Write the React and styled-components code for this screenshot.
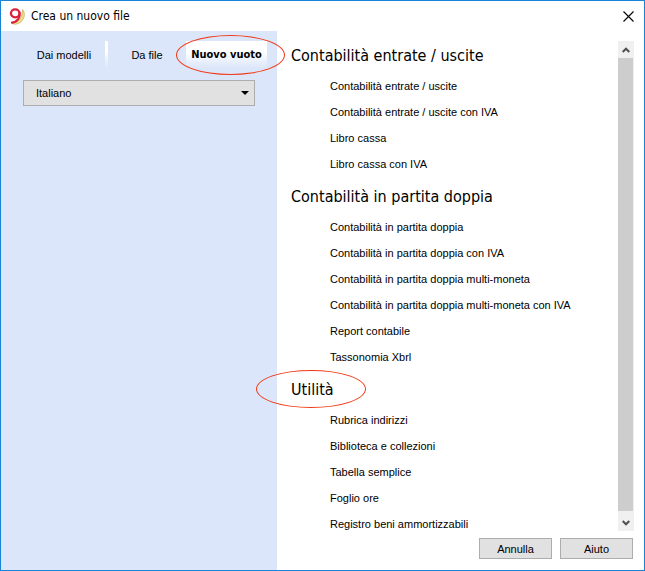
import React from "react";
import styled, { createGlobalStyle } from "styled-components";

const displayFont = '"DejaVu Sans Condensed", "Noto Sans", sans-serif';

const GlobalStyle = createGlobalStyle`
  * { box-sizing: border-box; }
  body { margin: 0; background: #fff; }
  body, button, select {
    font-family: "Liberation Sans", Arial, sans-serif;
    font-size: 11px;
    color: #000;
  }
`;

const Dialog = styled.div`
  display: flex;
  flex-direction: column;
  height: 100vh;
  border: 1px solid #1883d7;
  background: #fff;
`;

const TitleBar = styled.header`
  display: flex;
  align-items: center;
  flex: none;
  height: 30px;
  padding: 0 10px 0 8px;
`;

const Title = styled.h1`
  flex: 1;
  margin: 0 0 0 5px;
  font-family: ${displayFont};
  font-size: 12px;
  line-height: 16px;
  font-weight: 400;
`;

const CloseButton = styled.button`
  display: flex;
  padding: 0;
  border: 0;
  background: none;
`;

const Body = styled.div`
  display: flex;
  flex: 1;
  min-height: 0;
`;

const Sidebar = styled.aside`
  flex: 0 0 276px;
  padding: 10px 22px;
  background: #dbe6fa;
`;

const Tabs = styled.div`
  display: grid;
  grid-template-columns: 82px 3px 78px 81px;
  height: 27px;
  margin-right: -12px;
`;

const fade = "linear-gradient(#fff 40%, #dbe6fa)";

const Tab = styled.button`
  position: relative;
  z-index: 1;
  padding: 0;
  border: 0;
  white-space: nowrap;
  font-family: ${(p) => (p.$active ? displayFont : "inherit")};
  font-weight: ${(p) => (p.$active ? 700 : 400)};
  background: ${(p) => (p.$active ? fade : "none")};
`;

const TabDivider = styled.span`
  background: ${fade};
`;

const Marker = styled.span`
  position: absolute;
  border: 1px solid #f23a17;
  border-radius: 50%;
  pointer-events: none;
`;

const TabMarker = styled(Marker)`
  inset: -6px -18px -7px -10px;
`;

const HeadingMarker = styled(Marker)`
  inset: -5px -32px -3px -35px;
`;

const SelectBox = styled.div`
  display: grid;
  align-items: center;
  margin-top: 12px;
  & > * { grid-area: 1 / 1; }
  & > svg { justify-self: end; margin-right: 6px; pointer-events: none; }
`;

const Select = styled.select`
  appearance: none;
  width: 100%;
  height: 26px;
  padding: 0 12px;
  border: 1px solid #adadad;
  border-radius: 0;
  background: #e1e1e1;
`;

const Main = styled.main`
  display: flex;
  flex-direction: column;
  flex: 1;
  min-width: 0;
  padding: 10px 10px 11px 14px;
`;

const ScrollArea = styled.div`
  display: flex;
  flex: 1;
  min-height: 0;
  overflow-x: visible;
  overflow-y: clip;
`;

const Content = styled.div`
  flex: 1;
  min-width: 0;
`;

const Section = styled.section`
  margin-bottom: 5px;
`;

const Heading = styled.h2`
  position: relative;
  width: fit-content;
  margin: 0 0 2px;
  font-family: ${displayFont};
  font-size: 16px;
  line-height: 30px;
  font-weight: 400;
`;

const Items = styled.ul`
  margin: 0;
  padding: 0 0 0 39px;
  list-style: none;
`;

const Item = styled.li`
  line-height: 26px;
  white-space: nowrap;
`;

const ScrollBar = styled.div`
  display: flex;
  flex-direction: column;
  flex: none;
  width: 16px;
  background: #f0f0f0;
`;

const ScrollButton = styled.button`
  display: flex;
  align-items: center;
  justify-content: center;
  flex: none;
  height: ${(p) => (p.$end ? 20 : 17)}px;
  padding: ${(p) => (p.$end ? "4px 0 0" : "0")};
  border: 0;
  background: #f0f0f0;
`;

const Thumb = styled.div`
  flex: 1;
  margin-right: 1px;
  background: #cdcdcd;
`;

const Footer = styled.footer`
  display: flex;
  justify-content: flex-end;
  gap: 8px;
  padding: 7px 1px 0 0;
`;

const PushButton = styled.button`
  width: 73px;
  height: 21px;
  padding: 0;
  border: 1px solid #adadad;
  background: #e1e1e1;
`;

const Logo = () => (
  <svg width="17" height="17" viewBox="0 0 17 17" fill="none" aria-hidden="true">
    <path d="M13.500 1.500C16.500 4 16.500 13 8.500 15.800C6 16.500 4 16.200 3 15.300C10 14 13.500 9 13.500 1.500Z" fill="#f3dc8c" stroke="#c9a750" strokeWidth=".7" />
    <ellipse cx="6.200" cy="5.300" rx="4.300" ry="4" stroke="#d9203f" strokeWidth="2.200" />
    <path d="M10.600 4.500C11.500 9.500 8.500 14 3 14.600" stroke="#d9203f" strokeWidth="2.200" strokeLinecap="round" />
  </svg>
);

const Chevron = ({ down }) => (
  <svg width="8" height="6" viewBox="0 0 8 6" fill="none" stroke="#505050" strokeWidth="2" aria-hidden="true">
    <path d={down ? "M.7 1L4 4.300L7.300 1" : "M.7 5L4 1.700L7.300 5"} />
  </svg>
);

const sections = [
  { title: "Contabilità entrate / uscite", items: ["Contabilità entrate / uscite", "Contabilità entrate / uscite con IVA", "Libro cassa", "Libro cassa con IVA"] },
  { title: "Contabilità in partita doppia", items: ["Contabilità in partita doppia", "Contabilità in partita doppia con IVA", "Contabilità in partita doppia multi-moneta", "Contabilità in partita doppia multi-moneta con IVA", "Report contabile", "Tassonomia Xbrl"] },
  { title: "Utilità", marked: true, items: ["Rubrica indirizzi", "Biblioteca e collezioni", "Tabella semplice", "Foglio ore", "Registro beni ammortizzabili"] },
];

export default function App() {
  return (
    <>
      <GlobalStyle />
      <Dialog role="dialog" aria-labelledby="dialog-title">
        <TitleBar>
          <Logo />
          <Title id="dialog-title">Crea un nuovo file</Title>
          <CloseButton aria-label="Chiudi">
            <svg width="11" height="11" viewBox="0 0 11 11" stroke="#000" strokeWidth="1.100" aria-hidden="true">
              <path d="M.5 .5L10.500 10.500M10.500 .5L.5 10.500" />
            </svg>
          </CloseButton>
        </TitleBar>
        <Body>
          <Sidebar>
            <Tabs role="tablist">
              <Tab role="tab" aria-selected="false">Dai modelli</Tab>
              <TabDivider />
              <Tab role="tab" aria-selected="false">Da file</Tab>
              <Tab role="tab" aria-selected="true" $active>
                Nuovo vuoto
                <TabMarker />
              </Tab>
            </Tabs>
            <SelectBox>
              <Select aria-label="Lingua" defaultValue="it">
                <option value="it">Italiano</option>
              </Select>
              <svg width="8" height="4" viewBox="0 0 8 4" aria-hidden="true">
                <path d="M0 0H8L4 4Z" />
              </svg>
            </SelectBox>
          </Sidebar>
          <Main>
            <ScrollArea>
              <Content>
                {sections.map((s) => (
                  <Section key={s.title}>
                    <Heading>
                      {s.title}
                      {s.marked && <HeadingMarker />}
                    </Heading>
                    <Items>
                      {s.items.map((i) => (
                        <Item key={i}>{i}</Item>
                      ))}
                    </Items>
                  </Section>
                ))}
              </Content>
              <ScrollBar>
                <ScrollButton aria-label="Scorri su"><Chevron /></ScrollButton>
                <Thumb />
                <ScrollButton $end aria-label="Scorri giù"><Chevron down /></ScrollButton>
              </ScrollBar>
            </ScrollArea>
            <Footer>
              <PushButton>Annulla</PushButton>
              <PushButton>Aiuto</PushButton>
            </Footer>
          </Main>
        </Body>
      </Dialog>
    </>
  );
}
